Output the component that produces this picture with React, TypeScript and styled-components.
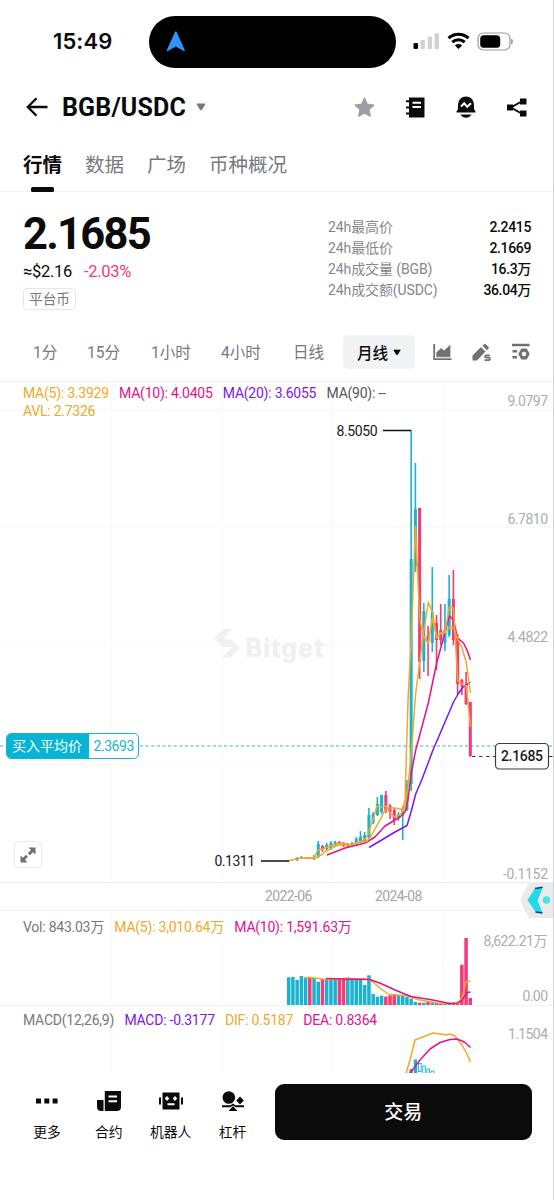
import React from "react";
import styled, { createGlobalStyle } from "styled-components";

const C = {
  ink: "#0b0b0c",
  gray: "#77797e",
  axis: "#abadb3",
  up: "#1ab3ce",
  down: "#f43a77",
  orange: "#f0a92a",
  pink: "#e0148f",
  purple: "#7d17ea",
  line: "#f1f2f3",
  grid: "#f7f8f9",
};

const GlobalStyle = createGlobalStyle`
  * { box-sizing: border-box; }
  body { margin: 0; background: #fff; }
  svg { display: block; }
`;

const Screen = styled.div`
  width: 554px;
  height: 1200px;
  overflow: hidden;
  display: flex;
  flex-direction: column;
  background: #fff;
  border-right: 1px solid #d3d3d5;
  color: ${C.ink};
  font-family: Roboto, "Noto Sans CJK SC", sans-serif;
  white-space: nowrap;
`;

/* ---------- status bar ---------- */
const StatusBar = styled.div`
  height: 80px;
  flex: none;
  display: flex;
  align-items: flex-start;
  padding: 16px 0 0 53px;
`;
const Clock = styled.div`
  width: 96px;
  font: 600 22px/51px Inter, sans-serif;
  letter-spacing: 0.1px;
`;
const Island = styled.div`
  width: 247px;
  height: 52px;
  border-radius: 26px;
  background: #000;
  padding: 15px 0 0 17px;
`;
const StatusIcons = styled.div`
  display: flex;
  align-items: center;
  height: 50px;
  margin-left: 17px;
  gap: 7px;
`;

/* ---------- header ---------- */
const Header = styled.header`
  height: 54px;
  flex: none;
  display: flex;
  align-items: center;
  padding: 0 26px;
`;
const Pair = styled.h1`
  margin: 0 10px 0 14px;
  width: 124px;
  padding-top: 1px;
  font-size: 25px;
  line-height: 54px;
  font-weight: 700;
  letter-spacing: 0.15px;
`;
const HeaderIcons = styled.div`
  display: flex;
  align-items: center;
  gap: 31px;
  margin-left: auto;
`;

/* ---------- tabs ---------- */
const Tabs = styled.nav`
  height: 58px;
  flex: none;
  display: flex;
  gap: 23px;
  padding: 0 23px;
  border-bottom: 1px solid ${C.line};
`;
const Tab = styled.div<{ $active?: boolean }>`
  display: flex;
  flex-direction: column;
  align-items: center;
  justify-content: space-between;
  font-size: 19.5px;
  line-height: 64px;
  height: 58px;
  font-weight: ${(p) => (p.$active ? 700 : 400)};
  color: ${(p) => (p.$active ? C.ink : C.gray)};
  &::after {
    content: "";
    flex: none;
    width: 23px;
    height: 5px;
    margin-top: -11px;
    border-radius: 1.5px;
    background: ${(p) => (p.$active ? C.ink : "transparent")};
  }
`;

/* ---------- ticker ---------- */
const Ticker = styled.section`
  height: 130px;
  flex: none;
  display: flex;
  justify-content: space-between;
  padding: 16px 22px 0 23px;
`;
const LastPrice = styled.div`
  font-size: 43.5px;
  line-height: 54px;
  height: 53px;
  font-weight: 700;
  letter-spacing: -1.75px;
`;
const SubPrice = styled.div`
  display: flex;
  gap: 12px;
  font-size: 16.5px;
  line-height: 22px;
  letter-spacing: -0.3px;
`;
const Change = styled.span`
  color: ${C.down};
`;
const Tag = styled.div`
  width: 53px;
  height: 22px;
  margin-top: 5px;
  border: 1px solid #e6e7e9;
  border-radius: 4px;
  font-size: 13.7px;
  line-height: 20px;
  text-align: center;
  color: ${C.gray};
`;
const Stats = styled.dl`
  margin: 9px 0 0;
  width: 203px;
`;
const StatRow = styled.div`
  display: flex;
  justify-content: space-between;
  height: 21.1px;
  line-height: 21px;
  font-size: 14px;
  dt {
    color: #85878c;
    letter-spacing: -0.1px;
  }
  dd {
    margin: 0;
    font-weight: 500;
    letter-spacing: -0.35px;
  }
`;

/* ---------- interval selector ---------- */
const Intervals = styled.div`
  height: 59px;
  flex: none;
  display: flex;
  align-items: center;
  padding: 1px 23px 0 33px;
  color: ${C.gray};
  font-size: 15.6px;
`;
const Interval = styled.span<{ $w: number }>`
  width: ${(p) => p.$w}px;
  padding-top: 2px;
  line-height: 34px;
`;
const IntervalActive = styled.div`
  display: flex;
  align-items: center;
  justify-content: center;
  gap: 5px;
  width: 72px;
  height: 34px;
  border-radius: 5px;
  background: #f2f3f5;
  color: ${C.ink};
  font-weight: 500;
`;
const ToolIcons = styled.div`
  display: flex;
  align-items: center;
  justify-content: space-between;
  flex: 1;
  margin-left: 18px;
`;

/* ---------- chart panels ---------- */
const Panel = styled.section<{ $h: number }>`
  position: relative;
  height: ${(p) => p.$h}px;
  flex: none;
  display: grid;
  border-top: 1px solid ${C.line};
  > * {
    grid-area: 1 / 1;
  }
`;
const Plot = styled.svg`
  overflow: hidden;
  font-family: Roboto, "Noto Sans CJK SC", sans-serif;
  font-size: 14px;
`;
const Legend = styled.div<{ $top: number }>`
  display: flex;
  flex-wrap: wrap;
  align-content: flex-start;
  gap: 0 10.3px;
  padding: ${(p) => p.$top}px 140px 0 23px;
  font-size: 14px;
  line-height: 17.5px;
  letter-spacing: -0.24px;
  z-index: 1;
`;
const LegendItem = styled.span<{ $c: string }>`
  color: ${(p) => p.$c};
`;
const BuyTag = styled.div`
  position: absolute;
  left: 6px;
  top: 351px;
  width: 133px;
  height: 26px;
  display: flex;
  border: 1px solid ${C.up};
  border-radius: 5px;
  background: #fff;
  overflow: hidden;
  font-size: 14px;
  line-height: 24px;
  color: ${C.up};
`;
const BuyTagName = styled.span`
  width: 82px;
  padding-left: 5px;
  background: #05b5d3;
  color: #fff;
`;
const BuyTagValue = styled.span`
  padding-left: 4.5px;
  letter-spacing: -0.45px;
`;
const ExpandButton = styled.button`
  position: absolute;
  left: 14px;
  top: 459px;
  width: 28px;
  height: 27px;
  display: grid;
  place-items: center;
  padding: 0;
  border: 1px solid #ececee;
  border-radius: 4px;
  background: #fff;
`;
const DateAxis = styled.div`
  position: relative;
  height: 28px;
  flex: none;
  display: flex;
  gap: 63px;
  padding-left: 265px;
  border-top: 1px solid #ededee;
  font-size: 14px;
  line-height: 27px;
  letter-spacing: -0.6px;
  color: #a3a5ab;
`;
const SideWidget = styled.div`
  position: absolute;
  right: 0;
  top: 0;
  z-index: 2;
`;

/* ---------- bottom bar ---------- */
const BottomBar = styled.footer`
  height: 127px;
  flex: none;
  display: flex;
  align-items: flex-start;
  padding: 11px 21px 0 16px;
  background: #fff;
`;
const NavItem = styled.div`
  width: 62px;
  display: flex;
  flex-direction: column;
  align-items: center;
  padding-top: 7px;
  font-size: 13.8px;
  line-height: 20px;
  gap: 11px;
`;
const TradeButton = styled.button`
  margin-left: 11px;
  width: 258px;
  height: 56px;
  border: 0;
  border-radius: 9px;
  background: #0b0b0c;
  color: #fff;
  font: 500 19px/56px Roboto, "Noto Sans CJK SC", sans-serif;
`;

/* ---------- chart data (plot coordinates) ---------- */
const X = (i: number) => 288.7 + 4.223 * i;

// [up, high, bodyTop, bodyBottom, low]
const candles: [number, number, number, number, number][] = [
  [0, 860, 860, 861, 861], [1, 859, 859, 860, 860], [1, 857, 858, 860, 861], [1, 856, 857, 859, 859],
  [0, 857, 858, 859, 859], [0, 857, 858, 859, 859], [1, 855, 857, 859, 860], [1, 841, 844, 857, 858],
  [0, 845, 846, 849, 852], [1, 843, 845, 849, 851], [1, 841, 843, 848, 850], [1, 841, 842, 845, 847],
  [0, 841, 842, 844, 845], [0, 842, 843, 846, 847], [0, 843, 844, 846, 847], [1, 842, 843, 845, 846],
  [1, 837, 839, 844, 846], [1, 831, 837, 842, 843], [1, 832, 835, 841, 842], [1, 808, 815, 837, 838],
  [1, 812, 814, 823, 824], [1, 797, 804, 815, 816], [1, 795, 795, 812, 814], [0, 791, 795, 811, 813],
  [0, 804, 806, 812, 819], [0, 808, 810, 820, 825], [1, 812, 814, 818, 821], [1, 806, 808, 816, 840],
  [1, 780, 784, 810, 811], [1, 430, 559, 784, 791], [1, 463, 509, 566, 572], [0, 508, 508, 662, 679],
  [1, 603, 611, 661, 672], [0, 626, 636, 642, 676], [1, 567, 612, 643, 652], [0, 615, 623, 640, 670],
  [0, 604, 630, 640, 645], [1, 604, 630, 643, 651], [1, 575, 599, 635, 637], [0, 570, 599, 640, 645],
  [0, 634, 638, 684, 694], [0, 679, 680, 686, 695], [0, 672, 684, 704, 705], [0, 702, 702, 756, 757],
];

// [top, up]
const volumes: [number, number][] = [
  [977.3, 1], [977, 1], [980, 1], [976, 1], [977.5, 1], [977, 0], [978, 1], [981.7, 1], [979, 0], [979, 1],
  [979, 1], [979, 1], [978, 0], [978, 0], [977.5, 1], [978, 1], [978, 1], [978, 1], [985, 1], [975.3, 1],
  [994, 1], [996.7, 1], [995.7, 1], [996.5, 0], [995.3, 0], [994.7, 0], [995, 1], [995.5, 1], [997, 1], [999, 1],
  [1002, 1], [1002.7, 0], [1002.7, 1], [1001.7, 0], [1002.5, 1], [1003, 0], [1003.3, 0], [1003.5, 1], [1004, 1], [1003.5, 0],
  [1003.5, 0], [964.7, 0], [938, 0], [998, 0],
];

const ma5 =
  "305,858 315,858 321,855 326,851 332,848 338,845 350,845 362,842 367,841 371,836 375,829 380,820 384,812 388,808 395,808 400,809 403,811 405,806 408,786 411.2,755 415.5,695 419.7,662 424,630 428.3,602 432.5,613 436.7,637 441,633 445,632 449.5,627 453.7,628 458,640 462,648 466.2,662 470.5,693";
const avl =
  "288,861 294,859.5 300,858 308,858.5 314,858 318,850 322,849 328,847 336,844 342,843 350,845 362,841 367,837 370,828 373,820 377,806 381,807 386,806 390,813 395,817 401,814 405,800 408,700 411.2,640 415.5,526 419.7,620 424,637 428,643 432.5,618 436.7,638 441,633 445,633 449.3,607 453.5,608 457.7,681 462,684 466.3,686 470.5,727";
const ma10 =
  "327,855 345,848 365,843 375,837 385,826 395,820 400,817 405,812 408,800 411,775 415.7,750 428.3,703 436.7,663 445,632 449.3,616 453.5,620 457.5,638 463.5,643 467,650 470.5,660";
const ma20 =
  "369,847.5 380,841 395,832 407,825.5 411,812 415.7,794 421.7,780 433,750 449.3,712 453.5,702 458,694 463,687 470.5,682";

const GRID_X = [111, 222, 332.5, 443];

const Curve = ({ pts, color }: { pts: string; color: string }) => (
  <polyline points={pts} fill="none" stroke={color} strokeWidth={1.5} strokeLinejoin="round" />
);

const AxisLabel = ({ x, y, w, children, fill = C.axis }: { x: number; y: number; w: number; children: string; fill?: string }) => (
  <text x={x} y={y} textLength={w} fill={fill}>
    {children}
  </text>
);

const GridColumns = ({ y1, y2 }: { y1: number; y2: number }) => (
  <>
    {GRID_X.map((x) => (
      <line key={x} x1={x} x2={x} y1={y1} y2={y2} stroke={C.grid} />
    ))}
  </>
);

const PricePlot = () => (
  <Plot width={553} height={500} viewBox="0 382 553 500">
    <GridColumns y1={382} y2={882} />
    {[409.5, 527.5, 645.5, 764.5].map((y) => (
      <line key={y} x1={0} x2={553} y1={y} y2={y} stroke={C.grid} />
    ))}
    <g fill="#f0f0f2">
      <path d="M223.500 629h8.500l-8.500 9 8.500 9h-9l-9-9z" />
      <path d="M222.500 639.500h8.500l9 8.500-10 9.500h-7.500l9-9.500z" />
      <text x={245.500} y={656.5} fontFamily="Inter" fontWeight={700} fontSize={25} textLength={78} stroke="#f0f0f2" strokeWidth={0.6}>
        Bitget
      </text>
    </g>
    <line x1={0} x2={553} y1={746} y2={746} stroke="#7fd0d6" strokeWidth={1.3} strokeDasharray="3.2 2.4" />
    {candles.map(([up, h, t, b, l], i) => {
      const color = up ? C.up : C.down;
      return (
        <g key={i} fill={color}>
          <rect x={X(i) - 0.8} y={h} width={1.6} height={l - h} />
          <rect x={X(i) - 1.5} y={t} width={3} height={b - t} />
        </g>
      );
    })}
    <Curve pts={ma20} color={C.purple} />
    <Curve pts={ma10} color={C.pink} />
    <Curve pts={avl} color={C.orange} />
    <Curve pts={ma5} color={C.orange} />
    <path d="M383 430.500h28M261 861h28" stroke="#111" strokeWidth={1.7} />
    <AxisLabel x={336.5} y={435.5} w={41} fill="#1a1a1c">8.5050</AxisLabel>
    <AxisLabel x={214.5} y={866} w={40.5} fill="#1a1a1c">0.1311</AxisLabel>
    <AxisLabel x={507.5} y={405.5} w={40.5}>9.0797</AxisLabel>
    <AxisLabel x={507.5} y={524} w={40.5}>6.7810</AxisLabel>
    <AxisLabel x={507.5} y={642} w={40.5}>4.4822</AxisLabel>
    <AxisLabel x={503} y={879} w={45}>-0.1152</AxisLabel>
    <path d="M472 756.500h23M549 756.500h4" stroke="#333" strokeDasharray="3.500 3.500" />
    <rect x={495.5} y={743.5} width={53} height={25.5} rx={4} fill="#fff" stroke="#3d3d40" strokeWidth={1.2} />
    <text x={501} y={761.3} textLength={42} fontWeight={500} fill="#1a1a1c">2.1685</text>
  </Plot>
);

const VolumePlot = () => (
  <Plot width={553} height={94} viewBox="0 911 553 94">
    <GridColumns y1={911} y2={1005} />
    {volumes.map(([t, up], i) => (
      <rect key={i} x={X(i) - 1.75} y={t} width={3.5} height={1005 - t} fill={up ? C.up : C.down} />
    ))}
    <Curve
      pts="305,977.5 311,977.5 322,979 333,979.5 345,978.5 368,979 373,982 381,989 389,994.5 406,995.5 413,998 420,1000 437,1003 457,1003.5 462,998 466,982 470.5,981"
      color={C.orange}
    />
    <Curve
      pts="326,978.5 350,979.2 370,979.5 382,984 395,990 411,996.5 430,999.5 450,1003.5 458,1003 462,1000 467,992.5 470.5,992"
      color={C.pink}
    />
    <AxisLabel x={483.5} y={945.5} w={64}>8,622.21万</AxisLabel>
    <AxisLabel x={522.5} y={1001} w={25.5}>0.00</AxisLabel>
  </Plot>
);

const MacdPlot = () => (
  <Plot width={553} height={67} viewBox="0 1006 553 67">
    <GridColumns y1={1006} y2={1073} />
    <rect x={409.5} y={1069} width={3.3} height={5} fill={C.up} />
    <rect x={413.8} y={1059.5} width={3.3} height={14} fill={C.up} />
    {[1063.5, 1066, 1069, 1071].map((y, i) => (
      <rect key={y} x={418.5 + i * 4.22} y={y} width={2.6} height={8 + i * 2} fill="#fff" stroke={C.up} strokeWidth={0.9} />
    ))}
    <Curve pts="406,1074 411,1056 415,1040 424,1036.5 433,1033 440,1034 446,1035 450,1034 455,1036 462,1045 467,1054 470.5,1062" color={C.orange} />
    <Curve pts="409,1074 414,1068 420,1060 430,1049 440,1042.5 450,1039.5 456,1039 461,1040.5 465,1042.5 470.5,1047.5" color={C.pink} />
    <AxisLabel x={508} y={1038.5} w={40}>1.1504</AxisLabel>
  </Plot>
);

const legends: Record<string, [string, string][]> = {
  price: [
    ["MA(5): 3.3929", C.orange],
    ["MA(10): 4.0405", C.pink],
    ["MA(20): 3.6055", C.purple],
    ["MA(90): --", "#55575c"],
    ["AVL: 2.7326", C.orange],
  ],
  volume: [
    ["Vol: 843.03万", C.gray],
    ["MA(5): 3,010.64万", C.orange],
    ["MA(10): 1,591.63万", C.pink],
  ],
  macd: [
    ["MACD(12,26,9)", C.gray],
    ["MACD: -0.3177", C.purple],
    ["DIF: 0.5187", C.orange],
    ["DEA: 0.8364", C.pink],
  ],
};

const IndicatorLegend = ({ name, top }: { name: string; top: number }) => (
  <Legend $top={top}>
    {legends[name].map(([label, color]) => (
      <LegendItem key={label} $c={color}>
        {label}
      </LegendItem>
    ))}
  </Legend>
);

const Caret = ({ w, h, color }: { w: number; h: number; color: string }) => (
  <svg width={w} height={h} viewBox="0 0 10 8">
    <path d="M1 1h8L5.700 6.500q-.7 1-1.400 0z" fill={color} stroke={color} strokeLinejoin="round" />
  </svg>
);

const stats = [
  ["24h最高价", "2.2415"],
  ["24h最低价", "2.1669"],
  ["24h成交量 (BGB)", "16.3万"],
  ["24h成交额(USDC)", "36.04万"],
];

export default function App() {
  return (
    <Screen>
      <GlobalStyle />
      <StatusBar>
        <Clock>15:49</Clock>
        <Island>
          <svg width="20" height="21" viewBox="0 0 20 21">
            <path d="M9.800 1L18 19.300 9.800 14.500 1.600 19.300z" fill="#2f94fb" stroke="#2f94fb" strokeWidth="1.600" strokeLinejoin="round" />
          </svg>
        </Island>
        <StatusIcons>
          <svg width="27" height="18" viewBox="0 0 27 18">
            <rect x="0.500" y="11" width="4.500" height="6" rx="1.200" fill="#000" />
            <rect x="7.500" y="8" width="4.500" height="9" rx="1.200" fill="#d2d2d3" />
            <rect x="14.600" y="4.500" width="4.500" height="12.500" rx="1.200" fill="#d2d2d3" />
            <rect x="21.500" y="1" width="4.500" height="16" rx="1.200" fill="#d2d2d3" />
          </svg>
          <svg width="23" height="18" viewBox="0 0 23 18">
            <g fill="none" stroke="#000" strokeWidth="3">
              <path d="M1.500 6.200a14.500 14.500 0 0 1 20 0" />
              <path d="M5.300 10.200a9 9 0 0 1 12.400 0" />
            </g>
            <path d="M11.500 17l-3.600-3.600a5.200 5.200 0 0 1 7.200 0z" fill="#000" />
          </svg>
          <svg width="37" height="19" viewBox="0 0 37 19">
            <rect x="1" y="1" width="32" height="17" rx="5.500" fill="#fff" stroke="#9b9b9c" strokeWidth="1.200" />
            <rect x="3.200" y="3.200" width="20" height="12.600" rx="3.500" fill="#000" />
            <path d="M34.700 7.300q1.800 2.200 0 4.400z" fill="#9b9b9c" stroke="#9b9b9c" />
          </svg>
        </StatusIcons>
      </StatusBar>

      <Header>
        <svg width="22" height="20" viewBox="0 0 22 20">
          <path d="M21.500 10H2.500M10.500 1.200L1.800 10l8.700 8.800" fill="none" stroke={C.ink} strokeWidth="2.300" />
        </svg>
        <Pair>BGB/USDC</Pair>
        <Caret w={10} h={8} color="#77797e" />
        <HeaderIcons>
          <svg width="21" height="20" viewBox="0 0 21 20">
            <path d="M10.500 1l2.800 6.200 6.600.8-4.900 4.600 1.300 6.600-5.800-3.200-5.800 3.200L6 12.600 1.100 8l6.600-.8z" fill="#9c9ea3" stroke="#9c9ea3" strokeWidth="1.200" strokeLinejoin="round" />
          </svg>
          <svg width="19" height="21" viewBox="0 0 19 21">
            <path d="M3 .5h15.500v20H3z" fill={C.ink} />
            <path d="M0 4.300h5M0 10.500h5M0 16.500h5" stroke={C.ink} strokeWidth="2" />
            <path d="M6.500 5.800h8.500M6.500 10h8.500" stroke="#fff" strokeWidth="1.900" />
          </svg>
          <svg width="20" height="22" viewBox="0 0 20 22">
            <path d="M2 13V8.500a8 8 0 0 1 16 0V13l1.500 2.500v1H.500v-1zM4.500 18.500h11q-2 3.200-5.500 3.200t-5.500-3.200z" fill={C.ink} />
            <path d="M5 10.500l3.200-3.200 3 3.500L15 7.300" fill="none" stroke="#fff" strokeWidth="2" />
          </svg>
          <svg width="20" height="19" viewBox="0 0 20 19">
            <path d="M0 6.500h6v6H0zM13 .5h6.500v6H13zM13 12.500h6.500v6H13z" fill={C.ink} />
            <path d="M14.500 3.500L4 9.500l10.500 6" fill="none" stroke={C.ink} strokeWidth="2" />
          </svg>
        </HeaderIcons>
      </Header>

      <Tabs>
        <Tab $active>行情</Tab>
        <Tab>数据</Tab>
        <Tab>广场</Tab>
        <Tab>币种概况</Tab>
      </Tabs>

      <Ticker>
        <div>
          <LastPrice>2.1685</LastPrice>
          <SubPrice>
            <span>≈$2.16</span>
            <Change>-2.03%</Change>
          </SubPrice>
          <Tag>平台币</Tag>
        </div>
        <Stats>
          {stats.map(([k, v]) => (
            <StatRow key={k}>
              <dt>{k}</dt>
              <dd>{v}</dd>
            </StatRow>
          ))}
        </Stats>
      </Ticker>

      <Intervals>
        <Interval $w={54}>1分</Interval>
        <Interval $w={64}>15分</Interval>
        <Interval $w={70}>1小时</Interval>
        <Interval $w={72}>4小时</Interval>
        <Interval $w={50}>日线</Interval>
        <IntervalActive>
          月线
          <Caret w={8} h={7} color={C.ink} />
        </IntervalActive>
        <ToolIcons>
          <svg width="19" height="18" viewBox="0 0 19 18">
            <path d="M1.200 1v15.200H18.500" fill="none" stroke="#6f7176" strokeWidth="1.800" />
            <path d="M3.800 13.800V9.500l4.200-4 3 2.500L17 2.500v11.300z" fill="#6f7176" stroke="#6f7176" strokeWidth="0.800" />
          </svg>
          <svg width="20" height="19" viewBox="0 0 20 19">
            <path d="M.500 17.500v-5L9 4l4.500 4.500-8.500 9zM10.500 2.800L13 .5l4.200 4.200-2.400 2.600z" fill="#6f7176" />
            <path d="M18 12.300h-3.500q-1.500 0-1.500 1.200t1.500 1.200h2q1.500 0 1.500 1.300t-1.500 1.200h-4" fill="none" stroke="#6f7176" strokeWidth="1.700" />
          </svg>
          <svg width="18" height="18" viewBox="0 0 18 18">
            <path d="M0 2h17.500M.500 8.300h4.500M.500 14.300h4.500" stroke="#6f7176" strokeWidth="2.400" />
            <path d="M9.300 5.500h5.400l3 5.500-3 5.500H9.300L6.300 11z" fill="#6f7176" />
            <circle cx="12" cy="11" r="2.300" fill="#fff" />
          </svg>
        </ToolIcons>
      </Intervals>

      <Panel $h={501}>
        <PricePlot />
        <IndicatorLegend name="price" top={3} />
        <BuyTag>
          <BuyTagName>买入平均价</BuyTagName>
          <BuyTagValue>2.3693</BuyTagValue>
        </BuyTag>
        <ExpandButton>
          <svg width="16" height="16" viewBox="0 0 16 16">
            <path d="M8.500.500h7v7L13 5.200 9.800 8.200 7.800 6.200 11 3zM.500 8.500L3 10.800l3-3 2 2-3 3 2.500 2.700h-7z" fill="#6f7176" />
          </svg>
        </ExpandButton>
      </Panel>

      <DateAxis>
        <span>2022-06</span>
        <span>2024-08</span>
        <SideWidget>
          <svg width="33" height="36" viewBox="0 0 33 36">
            <path d="M8 1.500Q9 0 11 0H33v35H11q-2 0-3-1.500L1 19.500q-1-2 0-4z" fill="#e9eaeb" />
            <path d="M15 5.500l8-1.500-5.500 13.500 5 12.500-7-1L7.500 17z" fill="#22dbea" />
            <path d="M15 5.500l7.500-1.300M15.500 29l7 1" stroke="#17406e" strokeWidth="1.500" />
            <circle cx="26.500" cy="17" r="3.800" fill="#4be3e6" />
          </svg>
        </SideWidget>
      </DateAxis>

      <Panel $h={95}>
        <VolumePlot />
        <IndicatorLegend name="volume" top={8} />
      </Panel>

      <Panel $h={68}>
        <MacdPlot />
        <IndicatorLegend name="macd" top={6} />
      </Panel>

      <BottomBar>
        <NavItem>
          <svg width="22" height="20" viewBox="0 0 22 20">
            <path d="M0 7.500h5v5H0zM8.300 7.500h5v5h-5zM16.600 7.500h5v5h-5z" fill={C.ink} />
          </svg>
          更多
        </NavItem>
        <NavItem>
          <svg width="24" height="20" viewBox="0 0 24 20">
            <path d="M7.800 0H24v16q0 4-4 4H7.800zM0 9h6.500v11H4q-4 0-4-4z" fill={C.ink} />
            <path d="M11.500 5.500h8.500M11.500 10.300h8.500" stroke="#fff" strokeWidth="2" />
          </svg>
          合约
        </NavItem>
        <NavItem>
          <svg width="24" height="20" viewBox="0 0 24 20">
            <path d="M3.500 1.500h17V18.500h-17zM0 6.500h2v7H0zM22 6.500h2v7h-2z" fill={C.ink} />
            <path d="M8 5l2.300 2.500L8 10 5.700 7.500zM16 5l2.300 2.500L16 10l-2.300-2.500zM8.500 12.300h7v2h-7z" fill="#fff" />
          </svg>
          机器人
        </NavItem>
        <NavItem>
          <svg width="22" height="20" viewBox="0 0 22 20">
            <circle cx="6.800" cy="6.500" r="6.300" fill={C.ink} />
            <path d="M18 5.500l3.800 4-3.800 4-3.800-4zM0 14.300h8.500L11 12.500l2.500 1.800H22v2h-8L11 14.500 8 16.300H0zM11 15l4.500 5h-9z" fill={C.ink} />
          </svg>
          杠杆
        </NavItem>
        <TradeButton>交易</TradeButton>
      </BottomBar>
    </Screen>
  );
}
